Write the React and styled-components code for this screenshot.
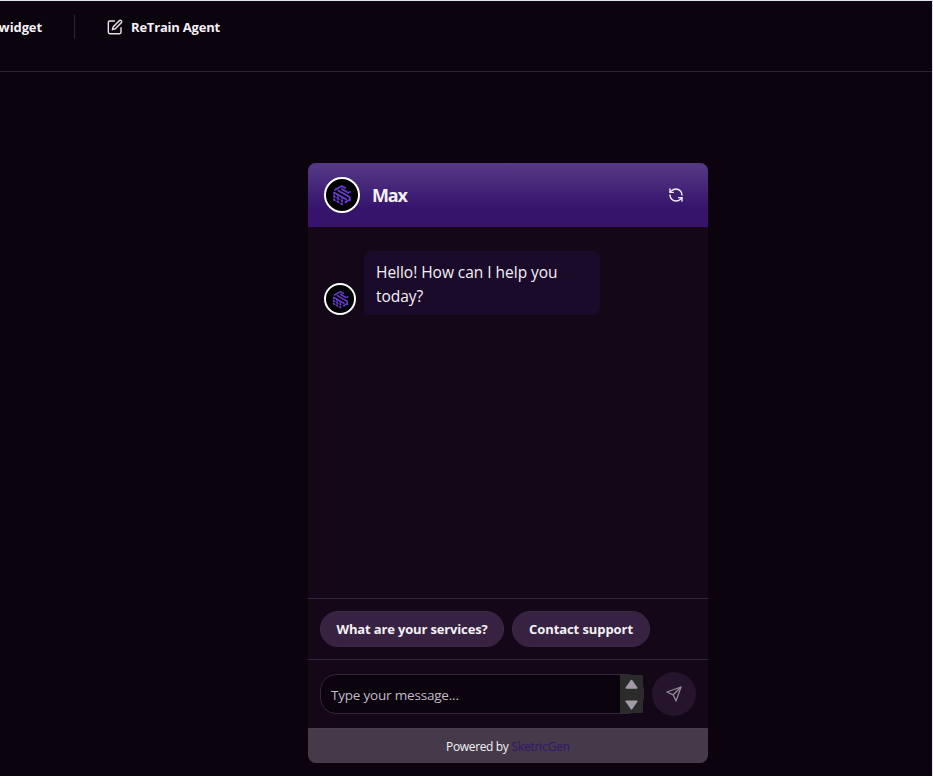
import React from 'react';
import styled, { createGlobalStyle } from 'styled-components';

const Global = createGlobalStyle`
  *, *::before, *::after { box-sizing: border-box; }
  body { margin: 0; background: #0b030e; font-family: "Segoe UI", "Open Sans", "Noto Sans", sans-serif; color: #f4f1f6; overflow: hidden; }
  button, textarea { font: inherit; color: inherit; }
`;

const Page = styled.div`
  height: 776px;
  display: flex;
  flex-direction: column;
  background: #0b030e;
  border-top: 1px solid #dfe6e9;
  border-right: 1px solid #dfe6e9;
`;

const Toolbar = styled.header`
  height: 71px;
  flex: none;
  display: flex;
  align-items: flex-start;
  padding-top: 14px;
  border-bottom: 1px solid #2d2433;
`;

const ToolbarItem = styled.button`
  height: 24px;
  width: ${(p) => p.$width}px;
  display: flex;
  align-items: center;
  justify-content: ${(p) => p.$align || 'flex-end'};
  gap: 8px;
  padding: 0;
  border: 0;
  background: none;
  white-space: nowrap;
  font-size: 13px;
  line-height: 24px;
  font-weight: 700;
  letter-spacing: ${(p) => p.$spacing}px;

  svg { flex: none; }
`;

const Divider = styled.span`
  width: 1px;
  height: 24px;
  margin: 0 32px 0 32px;
  background: #2d2433;
`;

const Main = styled.main`
  flex: 1;
  display: flex;
  padding: 91px 0 0 308px;
`;

const Card = styled.section`
  width: 400px;
  height: 600px;
  display: flex;
  flex-direction: column;
  border-radius: 8px;
  overflow: hidden;
  background: #140818;
`;

const CardHeader = styled.div`
  height: 64px;
  flex: none;
  display: flex;
  align-items: center;
  gap: 12px;
  padding: 0 24px 0 16px;
  background: linear-gradient(180deg, #563a86 0%, #36146c 70%, #36146c 100%);
`;

const AgentName = styled.h1`
  flex: 1;
  margin: 0;
  font-size: 18px;
  line-height: 28px;
  font-weight: 700;
  letter-spacing: ${(p) => p.$spacing}px;
`;

const AvatarRing = styled.span`
  width: ${(p) => p.$size}px;
  height: ${(p) => p.$size}px;
  flex: none;
  display: flex;
  align-items: center;
  justify-content: center;
  border: 2px solid #fff;
  border-radius: 50%;
  background: #000;
`;

const IconButton = styled.button`
  width: 16px;
  height: 16px;
  display: flex;
  padding: 0;
  border: 0;
  background: none;
`;

const Messages = styled.div`
  flex: 1;
  padding: 24px 16px;
`;

const MessageRow = styled.div`
  display: flex;
  align-items: flex-end;
  gap: 8px;
`;

const Bubble = styled.p`
  width: 236px;
  margin: 0;
  padding: 9px 12px 7px;
  border-radius: 8px 8px 8px 0;
  background: #1b0b2b;
  font-size: 15.5px;
  line-height: 24px;
  letter-spacing: -0.03px;
`;

const QuickReplies = styled.div`
  height: 61px;
  flex: none;
  display: flex;
  gap: 8px;
  padding: 12px;
  border-top: 1px solid #32263a;
`;

const Chip = styled.button`
  width: ${(p) => p.$width}px;
  height: 36px;
  padding: 0;
  border: 1px solid #3a2a45;
  border-radius: 18px;
  background: #372341;
  white-space: nowrap;
  font-size: 13px;
  font-weight: 700;
  letter-spacing: ${(p) => p.$spacing}px;
`;

const Composer = styled.div`
  height: 69px;
  flex: none;
  display: flex;
  align-items: center;
  gap: 8px;
  padding: 0 12px;
  border-top: 1px solid #32263a;
`;

const InputShell = styled.div`
  width: 324px;
  height: 40px;
  display: flex;
  align-items: stretch;
  border: 1px solid #32263a;
  border-radius: 16px;
  background: #0b030e;
`;

const Placeholder = styled.span`
  flex: 1;
  padding: 1px 0 0 10px;
  line-height: 38px;
  font-size: 13.5px;
  letter-spacing: -0.2px;
  color: #c2bbc8;
`;

const ScrollButtons = styled.span`
  width: 23px;
  display: flex;
  background: #2b2b2b;
`;

const SendButton = styled.button`
  width: 44px;
  height: 44px;
  display: flex;
  align-items: center;
  justify-content: center;
  padding: 0;
  border: 0;
  border-radius: 50%;
  background: #25142b;
`;

const Footer = styled.footer`
  height: 35px;
  flex: none;
  display: flex;
  align-items: center;
  justify-content: center;
  gap: 3px;
  padding-top: 2px;
  border-top: 1px solid #4a3d50;
  background: #443a49;
  font-size: 12px;
  line-height: 16px;
  letter-spacing: -0.35px;
`;

const Brand = styled.a`
  color: #36146c;
  letter-spacing: -0.2px;
`;

const DOTS = [
  [4.2, 10.2], [4.2, 13.4], [4.2, 16.8],
  [8, 12.2], [8, 15.4], [8, 18.8],
  [12, 14.6], [12, 17.8], [12, 21.2],
  [16, 19.2], [19.8, 17],
];

const Logo = ({ size }) => (
  <svg width={size} height={size} viewBox="0 0 24 24" fill="none" stroke="#6339c8" strokeLinecap="round" strokeLinejoin="round">
    <path strokeWidth="1.9" d="M5 6.8 11.8 3 15.2 4.8M8.4 7.6 19.6 14v2.8L15.4 19M12 6.1 18.2 9.7M4.4 9.6 8 11.8l8 4.4" />
    <path strokeWidth="0.9" d="M4.2 10v6.8l7.8 4.4v-6.6M8 12.2v6.6M4.2 13.4l7.8 4.4" />
    <g fill="#6339c8" stroke="none">
      {DOTS.map(([x, y]) => <circle key={`${x}-${y}`} cx={x} cy={y} r="1.15" />)}
      <circle cx="20" cy="9" r="1.1" />
    </g>
  </svg>
);

const Avatar = ({ size, logo }) => (
  <AvatarRing $size={size}><Logo size={logo} /></AvatarRing>
);

const EditIcon = () => (
  <svg width="16" height="16" viewBox="0 0 24 24" fill="none" stroke="#e2dfe6" strokeWidth="2.2" strokeLinecap="round" strokeLinejoin="round">
    <path d="M11 3H4a2 2 0 0 0-2 2v15a2 2 0 0 0 2 2h15a2 2 0 0 0 2-2v-7" />
    <path d="M18.4 2.6a2.12 2.12 0 0 1 3 3L12.4 14.6 8 16l1.4-4.4Z" />
  </svg>
);

const RefreshIcon = () => (
  <svg width="16" height="16" viewBox="0 0 24 24" fill="none" stroke="#f4f1f6" strokeWidth="2.1" strokeLinecap="round" strokeLinejoin="round">
    <path d="M21 12a9 9 0 0 0-9-9 9.75 9.75 0 0 0-6.74 2.74L3 8" />
    <path d="M3 3v5h5" />
    <path d="M3 12a9 9 0 0 0 9 9 9.75 9.75 0 0 0 6.74-2.74L21 16" />
    <path d="M16 16h5v5" />
  </svg>
);

const SendIcon = () => (
  <svg width="18" height="18" viewBox="0 0 18 18" fill="none" stroke="#958b99" strokeWidth="1.3" strokeLinejoin="round">
    <path d="M16 2 1.8 7l6.4 2.8L11 16.1Z" />
    <path d="M16 2 8.2 9.8" />
  </svg>
);

const ScrollArrows = () => (
  <svg width="23" height="38" viewBox="0 0 23 38" fill="#a29ba7" stroke="#a29ba7" strokeWidth="1.5" strokeLinejoin="round">
    <path d="M11.5 5.5 16.8 13H6.2Z" />
    <path d="M6.2 26.2h10.6L11.5 33.8Z" />
  </svg>
);

export default function App() {
  return (
    <Page>
      <Global />
      <Toolbar>
        <ToolbarItem $width={42} $spacing={-0.1}>widget</ToolbarItem>
        <Divider />
        <ToolbarItem $width={113} $spacing={-0.2} $align="flex-start"><EditIcon />ReTrain Agent</ToolbarItem>
      </Toolbar>
      <Main>
        <Card>
          <CardHeader>
            <Avatar size={36} logo={24} />
            <AgentName $spacing={-1.2}>Max</AgentName>
            <IconButton aria-label="Restart chat"><RefreshIcon /></IconButton>
          </CardHeader>
          <Messages>
            <MessageRow>
              <Avatar size={32} logo={21} />
              <Bubble>Hello! How can I help you today?</Bubble>
            </MessageRow>
          </Messages>
          <QuickReplies>
            <Chip $width={184} $spacing={-0.15}>What are your services?</Chip>
            <Chip $width={138} $spacing={-0.08}>Contact support</Chip>
          </QuickReplies>
          <Composer>
            <InputShell>
              <Placeholder>Type your message...</Placeholder>
              <ScrollButtons><ScrollArrows /></ScrollButtons>
            </InputShell>
            <SendButton aria-label="Send message"><SendIcon /></SendButton>
          </Composer>
          <Footer><span>Powered by</span><Brand>SketricGen</Brand></Footer>
        </Card>
      </Main>
    </Page>
  );
}
